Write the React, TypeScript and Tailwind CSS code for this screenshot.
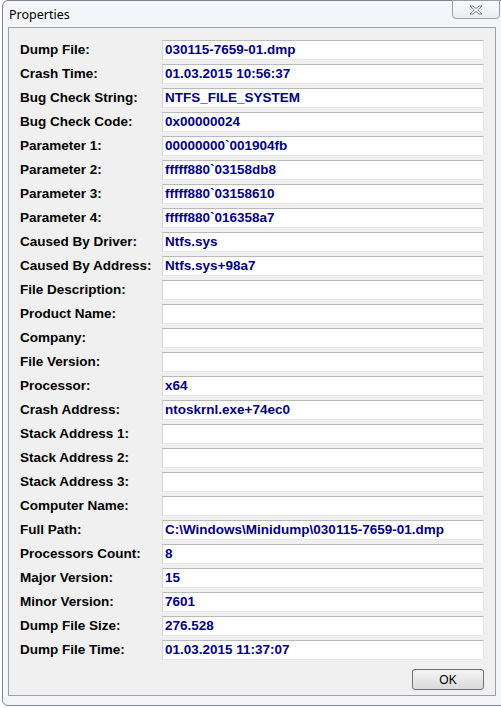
const rows: [string, string][] = [
  ["Dump File:", "030115-7659-01.dmp"],
  ["Crash Time:", "01.03.2015 10:56:37"],
  ["Bug Check String:", "NTFS_FILE_SYSTEM"],
  ["Bug Check Code:", "0x00000024"],
  ["Parameter 1:", "00000000`001904fb"],
  ["Parameter 2:", "fffff880`03158db8"],
  ["Parameter 3:", "fffff880`03158610"],
  ["Parameter 4:", "fffff880`016358a7"],
  ["Caused By Driver:", "Ntfs.sys"],
  ["Caused By Address:", "Ntfs.sys+98a7"],
  ["File Description:", ""],
  ["Product Name:", ""],
  ["Company:", ""],
  ["File Version:", ""],
  ["Processor:", "x64"],
  ["Crash Address:", "ntoskrnl.exe+74ec0"],
  ["Stack Address 1:", ""],
  ["Stack Address 2:", ""],
  ["Stack Address 3:", ""],
  ["Computer Name:", ""],
  ["Full Path:", "C:\\Windows\\Minidump\\030115-7659-01.dmp"],
  ["Processors Count:", "8"],
  ["Major Version:", "15"],
  ["Minor Version:", "7601"],
  ["Dump File Size:", "276.528"],
  ["Dump File Time:", "01.03.2015 11:37:07"],
];

function CloseIcon() {
  return (
    <svg width="14" height="10" viewBox="0 0 14 10">
      <path
        d="M1 1h3l3 2.6L10 1h3L8.8 5 13 9h-3L7 6.4 4 9H1l4.2-4z"
        fill="#fff"
        stroke="#7a7a7a"
        strokeWidth="1"
        strokeLinejoin="round"
      />
    </svg>
  );
}

export default function App() {
  return (
    <div className="w-[501px] h-[708px] overflow-hidden bg-white">
      <div className="relative ml-[2px] w-[506px] h-[706px] rounded-[6px] border border-[#7d8591] bg-[#f3f5f8]">
        <div className="h-[26px] pl-[6px] pt-[6px] text-[12.5px] leading-[15px] text-black font-['Noto_Sans','Liberation_Sans',sans-serif]">
          Properties
        </div>
        <div className="absolute top-[-1px] left-[449px] w-[48px] h-[19px] rounded-b-[4px] border border-[#9aa0a8] bg-gradient-to-b from-[#fbfbfb] to-[#e9ecef] flex items-center justify-center">
          <CloseIcon />
        </div>
        <div className="ml-[5px] w-[488px] h-[669px] border border-[#a0a0a0] bg-[#f0f0f0] pt-[12px] pl-[11px] pr-[11px] font-['Liberation_Sans',Arial,sans-serif] font-bold text-[13.5px]">
          <div className="flex flex-col gap-[4px]">
            {rows.map(([label, value]) => (
              <div key={label} className="flex items-center h-[20px]">
                <div className="w-[142px] text-black leading-[16px]">{label}</div>
                <div className="w-[322px] h-[20px] bg-white border-t border-l border-t-[#b9b9b9] border-l-[#d5d5d5] border-b border-r border-b-[#e8e8e8] border-r-[#e8e8e8] pl-[2px] flex items-center text-[#000080] leading-[16px]">
                  {value}
                </div>
              </div>
            ))}
          </div>
          <div className="flex justify-end mt-[9px]">
            <button className="w-[72px] h-[21px] rounded-[3px] border border-[#707070] bg-gradient-to-b from-[#f4f4f4] to-[#dadada] text-[12px] font-normal text-black leading-[14px] font-['Liberation_Sans',Arial,sans-serif]">
              OK
            </button>
          </div>
        </div>
      </div>
    </div>
  );
}
